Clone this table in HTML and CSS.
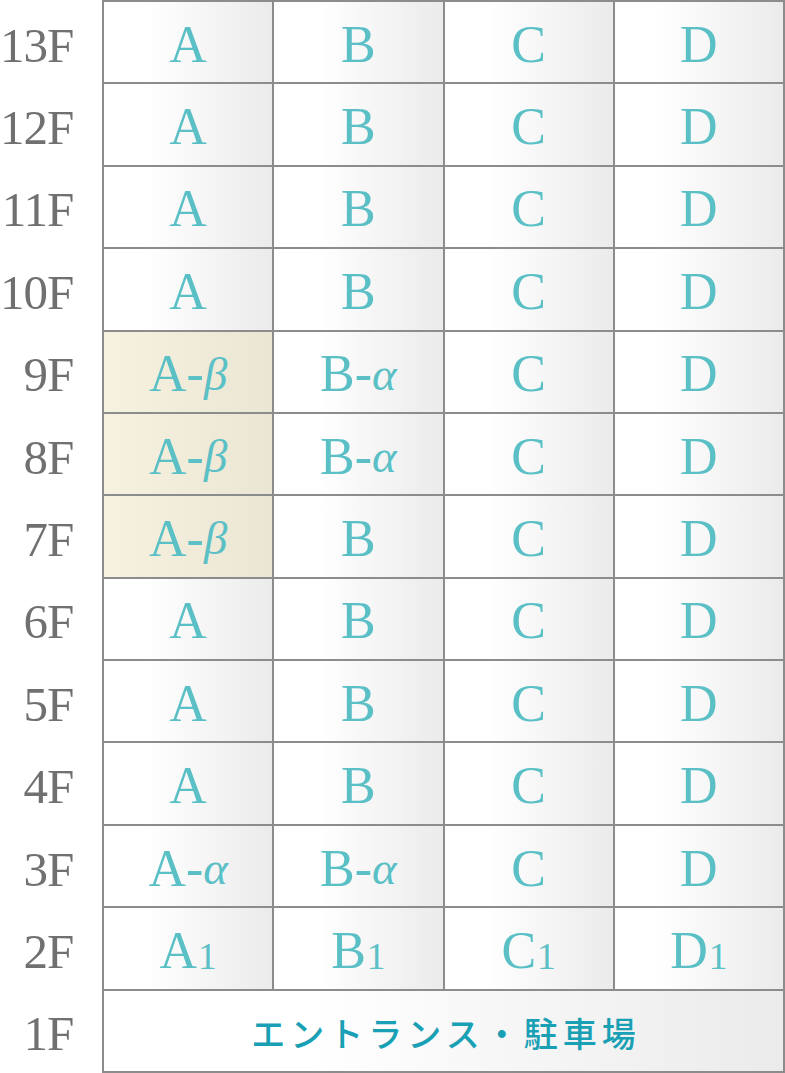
FILE: index.html
```html
<!DOCTYPE html>
<html lang="ja">
<head>
<meta charset="utf-8">
<title>フロア構成</title>
<link rel="stylesheet" href="styles.css">
</head>
<body>
<div class="page">
  <div class="labels">
    <div class="floor">13F</div>
    <div class="floor">12F</div>
    <div class="floor">11F</div>
    <div class="floor">10F</div>
    <div class="floor">9F</div>
    <div class="floor">8F</div>
    <div class="floor">7F</div>
    <div class="floor">6F</div>
    <div class="floor">5F</div>
    <div class="floor">4F</div>
    <div class="floor">3F</div>
    <div class="floor">2F</div>
    <div class="floor">1F</div>
  </div>
  <div class="table">
    <div class="cell">A</div><div class="cell">B</div><div class="cell">C</div><div class="cell">D</div>
    <div class="cell">A</div><div class="cell">B</div><div class="cell">C</div><div class="cell">D</div>
    <div class="cell">A</div><div class="cell">B</div><div class="cell">C</div><div class="cell">D</div>
    <div class="cell">A</div><div class="cell">B</div><div class="cell">C</div><div class="cell">D</div>
    <div class="cell beige">A-<span class="gk">β</span></div><div class="cell">B-<span class="gk">α</span></div><div class="cell">C</div><div class="cell">D</div>
    <div class="cell beige">A-<span class="gk">β</span></div><div class="cell">B-<span class="gk">α</span></div><div class="cell">C</div><div class="cell">D</div>
    <div class="cell beige">A-<span class="gk">β</span></div><div class="cell">B</div><div class="cell">C</div><div class="cell">D</div>
    <div class="cell">A</div><div class="cell">B</div><div class="cell">C</div><div class="cell">D</div>
    <div class="cell">A</div><div class="cell">B</div><div class="cell">C</div><div class="cell">D</div>
    <div class="cell">A</div><div class="cell">B</div><div class="cell">C</div><div class="cell">D</div>
    <div class="cell">A-<span class="gk">α</span></div><div class="cell">B-<span class="gk">α</span></div><div class="cell">C</div><div class="cell">D</div>
    <div class="cell">A<span class="num">1</span></div><div class="cell">B<span class="num">1</span></div><div class="cell">C<span class="num">1</span></div><div class="cell">D<span class="num">1</span></div>
    <div class="cell wide">エントランス・駐車場</div>
  </div>
</div>
</body>
</html>
```

FILE: styles.css
```css
html, body {
  margin: 0;
  padding: 0;
  background: #ffffff;
}

.page {
  display: flex;
  width: 785px;
  height: 1073px;
}

.labels {
  width: 102px;
  display: grid;
  grid-template-rows: repeat(13, 1fr);
  row-gap: 2px;
  padding: 2px 0;
  box-sizing: border-box;
}

.floor {
  display: flex;
  align-items: center;
  justify-content: flex-end;
  padding-right: 29px;
  padding-top: 6px;
  font-family: "Liberation Serif", "Times New Roman", serif;
  font-size: 49px;
  color: #707070;
  letter-spacing: -1px;
}

.table {
  flex: 1;
  display: grid;
  grid-template-columns: repeat(4, 1fr);
  grid-template-rows: repeat(13, 1fr);
  gap: 2px;
  padding: 2px;
  background: #8c8c8c;
  box-sizing: border-box;
}

.cell {
  display: flex;
  align-items: center;
  justify-content: center;
  padding-top: 4px;
  background: linear-gradient(to right, #ffffff 25%, #ebebeb 100%);
  font-family: "Liberation Serif", "Times New Roman", serif;
  font-size: 52px;
  color: #5ac0c6;
}

.cell.beige {
  background: linear-gradient(to right, #f7f2e0 0%, #ebe5d3 100%);
}

.gk {
  font-style: italic;
  font-size: 0.9em;
}

.num {
  font-size: 0.72em;
  align-self: center;
  padding-top: 12px;
  margin-left: 1px;
}

.cell.wide {
  grid-column: 1 / 5;
  font-family: "Noto Sans CJK JP", sans-serif;
  font-size: 34px;
  font-weight: 500;
  letter-spacing: 5px;
  color: #1aa0b4;
  padding-left: 5px;
  background: linear-gradient(to right, #ffffff 30%, #ebebeb 100%);
}
```
